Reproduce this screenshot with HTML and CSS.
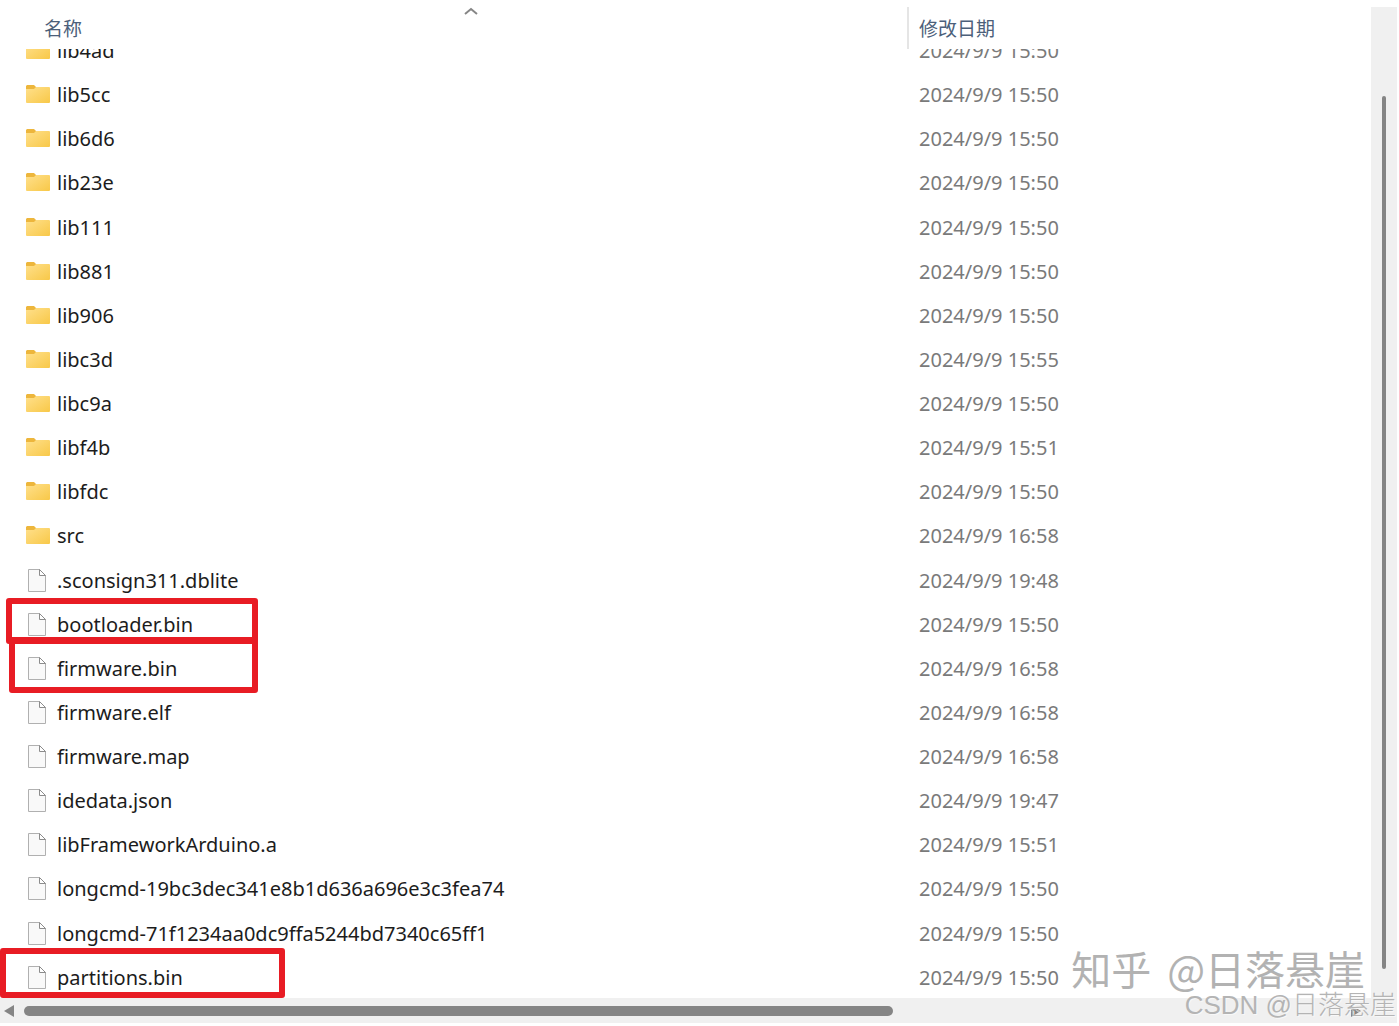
FILE: index.html
```
<!DOCTYPE html>
<html lang="zh-CN">
<head>
<meta charset="utf-8">
<title>build</title>
<link rel="stylesheet" href="styles.css">
</head>
<body>
<svg width="0" height="0" class="defs" aria-hidden="true">
  <defs>
    <linearGradient id="fold" x1="0" y1="0" x2="1" y2="1">
      <stop offset="0" stop-color="#ffe08c"/>
      <stop offset="1" stop-color="#f8c848"/>
    </linearGradient>
    <symbol id="folder" viewBox="0 0 24 24">
      <path d="M1 2h7l2 2h13v6H0V3z" fill="#edb63c"/>
      <path d="M0 6h8l2-2h13q1 0 1 1v14q0 1-1 1H1q-1 0-1-1z" fill="url(#fold)"/>
    </symbol>
    <symbol id="file" viewBox="0 0 24 24">
      <path d="M2.500.500H13.500L19.500 6.500V22.500H2.500z" fill="#f9f9f9" stroke="#b0b0b0"/>
      <path d="M13.500.500V6.500H19.500z" fill="#fff" stroke="#8c8c8c"/>
    </symbol>
  </defs>
</svg>
<main class="explorer">
  <section class="content">
    <header class="columns">
      <button class="column name-column" type="button">名称
        <svg class="sort" viewBox="0 0 14 8" aria-hidden="true"><path d="M1 7l6-5 6 5" fill="none" stroke="#868686" stroke-width="2"/></svg>
      </button>
      <button class="column date-column" type="button">修改日期</button>
    </header>
    <div class="pane">
      <table class="files" aria-label="文件">
        <tbody id="rows"></tbody>
      </table>
    </div>
    <div class="hbar">
      <svg class="arrow" viewBox="0 0 10 12" aria-hidden="true"><path d="M0 6L10 0V12z" fill="#858585"/></svg>
      <div class="htrack"><div class="hthumb"></div></div>
      <svg class="arrow" viewBox="0 0 10 12" aria-hidden="true"><path d="M10 6L0 0V12z" fill="#858585"/></svg>
    </div>
  </section>
  <div class="vbar"><div class="vthumb"></div></div>
  <div class="mark mark-zhihu"><span>知乎</span><span>@日落悬崖</span></div>
  <div class="mark mark-csdn">CSDN @日落悬崖</div>
</main>
<script src="files.js"></script>
</body>
</html>
```
FILE: styles.css
```
* { box-sizing: border-box; }
body {
  margin: 0;
  background: #fff;
  color: #1c1c1c;
  font-family: "Noto Sans", "Noto Sans CJK SC", sans-serif;
  font-size: 20px;
}
.defs { position: absolute; }
.explorer {
  position: relative;
  display: flex;
  height: 100vh;
  padding: 7px 2px 3px 0;
  overflow: hidden;
}
.content {
  flex: 1;
  min-width: 0;
  display: flex;
  flex-direction: column;
}
.columns {
  display: flex;
  flex: 0 0 42px;
}
.column {
  position: relative;
  border: 0;
  background: none;
  color: #4c607a;
  font-family: "Noto Sans CJK SC", sans-serif;
  font-size: 19px;
  line-height: 42px;
  padding: 0;
  text-align: left;
}
.name-column {
  width: 909px;
  padding-left: 44px;
  border-right: 2px solid #e5e5e5;
}
.date-column { padding-left: 10px; }
.sort {
  position: absolute;
  left: 464px;
  top: 0;
  width: 14px;
  height: 8px;
}
.pane {
  flex: 1;
  min-height: 0;
  overflow: hidden;
}
.files {
  width: 100%;
  height: calc(100% + 22px);
  margin-top: -20px;
  border-collapse: collapse;
  table-layout: fixed;
}
.files td {
  position: relative;
  height: 44px;
  padding: 0;
  line-height: 28px;
  white-space: nowrap;
}
.files .name {
  width: 919px;
  padding-left: 26px;
}
.entry {
  display: flex;
  align-items: center;
  gap: 7px;
}
.icon {
  width: 24px;
  height: 24px;
}
.date { color: #7a7a7a; }
.box {
  position: absolute;
  border: 6px solid #e81c24;
  border-radius: 3px;
}
.box-bootloader { left: 6px; top: -5px; width: 252px; height: 46px; }
.box-firmware { left: 9px; top: -10px; width: 249px; height: 56px; }
.box-partitions { left: 0; top: -8px; width: 285px; height: 50px; }
.hbar {
  display: flex;
  align-items: center;
  flex: 0 0 25px;
  gap: 10px;
  padding: 0 10px 0 4px;
  background: #f0f0f0;
}
.arrow {
  width: 10px;
  height: 12px;
}
.htrack { flex: 1; }
.hthumb {
  width: 66%;
  height: 10px;
  border-radius: 5px;
  background: #858585;
}
.vbar {
  flex: 0 0 26px;
  padding: 89px 0 54px 11px;
  background: #f0f0f0;
}
.vthumb {
  width: 4px;
  height: 100%;
  border-radius: 2px;
  background: #858585;
}
.mark {
  position: absolute;
  white-space: nowrap;
}
.mark-zhihu {
  display: flex;
  gap: 16px;
  right: 34px;
  bottom: 28px;
  color: #b2b2b2;
  font-family: "Noto Sans CJK SC", sans-serif;
  font-size: 40px;
  line-height: 60px;
}
.mark-csdn {
  right: 3px;
  bottom: 1px;
  color: #b4b4b4;
  font-family: "Liberation Sans", "Noto Sans CJK SC", sans-serif;
  font-size: 26px;
  font-weight: 300;
  line-height: 40px;
  text-shadow: 1px 1px 0 #f8f8f8;
}
```
FILE: files.js
```
const files = [
  ["folder", "lib4ad", "15:50"],
  ["folder", "lib5cc", "15:50"],
  ["folder", "lib6d6", "15:50"],
  ["folder", "lib23e", "15:50"],
  ["folder", "lib111", "15:50"],
  ["folder", "lib881", "15:50"],
  ["folder", "lib906", "15:50"],
  ["folder", "libc3d", "15:55"],
  ["folder", "libc9a", "15:50"],
  ["folder", "libf4b", "15:51"],
  ["folder", "libfdc", "15:50"],
  ["folder", "src", "16:58"],
  ["file", ".sconsign311.dblite", "19:48"],
  ["file", "bootloader.bin", "15:50", "bootloader"],
  ["file", "firmware.bin", "16:58", "firmware"],
  ["file", "firmware.elf", "16:58"],
  ["file", "firmware.map", "16:58"],
  ["file", "idedata.json", "19:47"],
  ["file", "libFrameworkArduino.a", "15:51"],
  ["file", "longcmd-19bc3dec341e8b1d636a696e3c3fea74", "15:50"],
  ["file", "longcmd-71f1234aa0dc9ffa5244bd7340c65ff1", "15:50"],
  ["file", "partitions.bin", "15:50", "partitions"]
];
document.getElementById("rows").innerHTML = files.map(([kind, name, time, box]) =>
  `<tr><td class="name"><div class="entry"><svg class="icon" aria-hidden="true"><use href="#${kind}"/></svg><span>${name}</span></div>` +
  (box ? `<div class="box box-${box}"></div>` : "") +
  `</td><td class="date">2024/9/9 ${time}</td></tr>`
).join("");
```
